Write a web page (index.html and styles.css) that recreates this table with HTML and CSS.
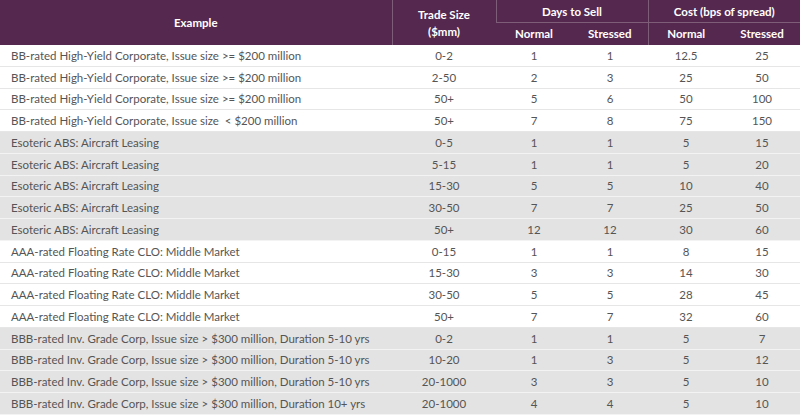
FILE: index.html
```html
<!DOCTYPE html>
<html>
<head>
<meta charset="utf-8">
<link rel="stylesheet" href="styles.css">
</head>
<body>
<table class="tbl">
  <colgroup>
    <col class="c-ex"><col class="c-ts"><col class="c-n"><col class="c-n"><col class="c-n"><col class="c-n">
  </colgroup>
  <thead>
    <tr class="h1">
      <th rowspan="2" class="first">Example</th>
      <th rowspan="2" class="ts">Trade Size<br>($mm)</th>
      <th colspan="2">Days to Sell</th>
      <th colspan="2" class="last">Cost (bps of spread)</th>
    </tr>
    <tr class="h2">
      <th class="sub">Normal</th>
      <th class="sub nb">Stressed</th>
      <th class="sub">Normal</th>
      <th class="sub last">Stressed</th>
    </tr>
  </thead>
  <tbody>
    <tr class="w"><td>BB-rated High-Yield Corporate, Issue size &gt;= $200 million</td><td>0-2</td><td>1</td><td>1</td><td>12.5</td><td>25</td></tr>
    <tr class="w"><td>BB-rated High-Yield Corporate, Issue size &gt;= $200 million</td><td>2-50</td><td>2</td><td>3</td><td>25</td><td>50</td></tr>
    <tr class="w"><td>BB-rated High-Yield Corporate, Issue size &gt;= $200 million</td><td>50+</td><td>5</td><td>6</td><td>50</td><td>100</td></tr>
    <tr class="w"><td>BB-rated High-Yield Corporate, Issue size &nbsp;&lt; $200 million</td><td>50+</td><td>7</td><td>8</td><td>75</td><td>150</td></tr>
    <tr class="g"><td>Esoteric ABS: Aircraft Leasing</td><td>0-5</td><td>1</td><td>1</td><td>5</td><td>15</td></tr>
    <tr class="g"><td>Esoteric ABS: Aircraft Leasing</td><td>5-15</td><td>1</td><td>1</td><td>5</td><td>20</td></tr>
    <tr class="g"><td>Esoteric ABS: Aircraft Leasing</td><td>15-30</td><td>5</td><td>5</td><td>10</td><td>40</td></tr>
    <tr class="g"><td>Esoteric ABS: Aircraft Leasing</td><td>30-50</td><td>7</td><td>7</td><td>25</td><td>50</td></tr>
    <tr class="g"><td>Esoteric ABS: Aircraft Leasing</td><td>50+</td><td>12</td><td>12</td><td>30</td><td>60</td></tr>
    <tr class="w"><td>AAA-rated Floating Rate CLO: Middle Market</td><td>0-15</td><td>1</td><td>1</td><td>8</td><td>15</td></tr>
    <tr class="w"><td>AAA-rated Floating Rate CLO: Middle Market</td><td>15-30</td><td>3</td><td>3</td><td>14</td><td>30</td></tr>
    <tr class="w"><td>AAA-rated Floating Rate CLO: Middle Market</td><td>30-50</td><td>5</td><td>5</td><td>28</td><td>45</td></tr>
    <tr class="w"><td>AAA-rated Floating Rate CLO: Middle Market</td><td>50+</td><td>7</td><td>7</td><td>32</td><td>60</td></tr>
    <tr class="g"><td>BBB-rated Inv. Grade Corp, Issue size &gt; $300 million, Duration 5-10 yrs</td><td>0-2</td><td>1</td><td>1</td><td>5</td><td>7</td></tr>
    <tr class="g"><td>BBB-rated Inv. Grade Corp, Issue size &gt; $300 million, Duration 5-10 yrs</td><td>10-20</td><td>1</td><td>3</td><td>5</td><td>12</td></tr>
    <tr class="g"><td>BBB-rated Inv. Grade Corp, Issue size &gt; $300 million, Duration 5-10 yrs</td><td>20-1000</td><td>3</td><td>3</td><td>5</td><td>10</td></tr>
    <tr class="g"><td>BBB-rated Inv. Grade Corp, Issue size &gt; $300 million, Duration 10+ yrs</td><td>20-1000</td><td>4</td><td>4</td><td>5</td><td>10</td></tr>
  </tbody>
</table>
</body>
</html>
```

FILE: styles.css
```css
html, body {
  margin: 0;
  padding: 0;
  background: #ffffff;
}
.tbl {
  width: 800px;
  border-collapse: collapse;
  table-layout: fixed;
  font-family: Lato, "Open Sans", sans-serif;
  font-size: 11.5px;
  color: #555555;
}
.c-ex { width: 392px; }
.c-ts { width: 104px; }
.c-n { width: 76px; }

thead th {
  background: #55284f;
  color: #ffffff;
  font-weight: 700;
  text-align: center;
  padding: 0;
  border-left: 1px solid #7d5d78;
  line-height: 16px;
}
thead th.first { border-left: none; }
.h1 th { height: 21px; }
.h1 th[colspan] { border-bottom: 1px solid #7d5d78; vertical-align: middle; padding-top: 1px; }
.h2 th { height: 22px; }
.h2 th.sub { border-left: none; }
.h2 th.sub:nth-child(3) { border-left: 1px solid #7d5d78; }
.ts { line-height: 17px; }

tbody td {
  height: 20.75px;
  padding: 0;
  text-align: center;
  border-bottom: 1px solid #e6e6e6;
  vertical-align: middle;
}
tbody td:first-child {
  text-align: left;
  padding-left: 11px;
  white-space: nowrap;
}
tbody tr.g td {
  background: #e3e3e3;
  border-bottom: 1px solid #f3f3f3;
}
```
